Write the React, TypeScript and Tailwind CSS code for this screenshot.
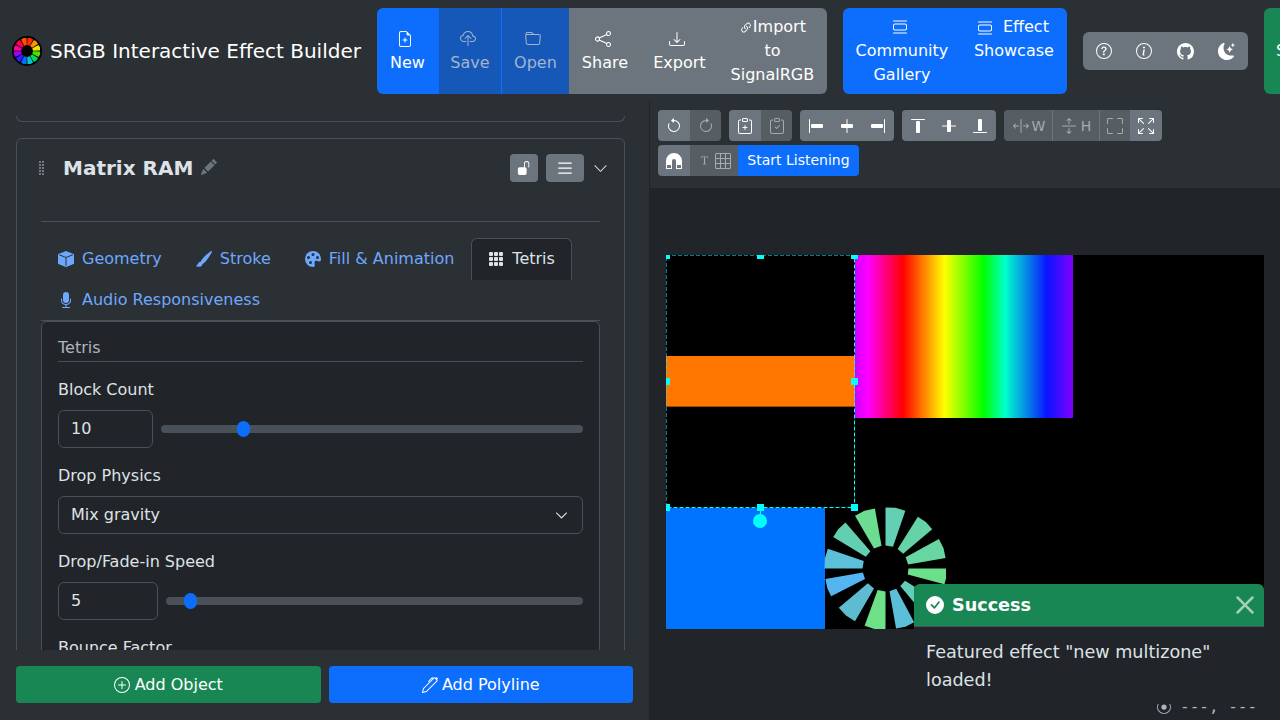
import type { ReactNode } from "react";
import {
  BsFileEarmarkPlus,
  BsCloudUpload,
  BsFolder,
  BsShare,
  BsDownload,
  BsLink45Deg,
  BsViewList,
  BsQuestionCircle,
  BsInfoCircle,
  BsGithub,
  BsMoonStarsFill,
  BsArrowCounterclockwise,
  BsArrowClockwise,
  BsClipboardPlus,
  BsClipboardCheck,
  BsAlignStart,
  BsAlignCenter,
  BsAlignEnd,
  BsAlignTop,
  BsAlignMiddle,
  BsAlignBottom,
  BsArrowsExpand,
  BsArrowsFullscreen,
  BsFullscreen,
  BsMagnetFill,
  BsFonts,
  BsGrid3X3,
  BsGripVertical,
  BsPencilFill,
  BsPen,
  BsUnlockFill,
  BsList,
  BsChevronDown,
  BsBoxFill,
  BsBrushFill,
  BsPaletteFill,
  BsGrid3X3GapFill,
  BsMicFill,
  BsPlusCircle,
  BsCheckCircleFill,
  BsRecordCircle,
  BsX,
} from "react-icons/bs";

const wedges = [
  { a: 0, b: 19, c: "#63cfb4" },
  { a: 32, b: 50, c: "#66d2a8" },
  { a: 61, b: 80, c: "#68d6a0" },
  { a: 90, b: 105, c: "#6be08a" },
  { a: 122, b: 140, c: "#62cdb8" },
  { a: 152, b: 170, c: "#5cbfd8" },
  { a: 180, b: 200, c: "#6de088" },
  { a: 210, b: 230, c: "#5dbcd0" },
  { a: 243, b: 260, c: "#55b5f0" },
  { a: 270, b: 289, c: "#5cc0d8" },
  { a: 301, b: 319, c: "#62cfb0" },
  { a: 330, b: 350, c: "#6cdc90" },
];

const logoColors = ["#ff2a00", "#ff9000", "#e8e800", "#50e000", "#00d860", "#00c8d0", "#0070ff", "#3020ff", "#a000ff", "#ff00a0", "#ff0050", "#ff5000"];

function pt(r: number, deg: number, cx: number, cy: number) {
  const t = (deg * Math.PI) / 180;
  return `${(cx + r * Math.sin(t)).toFixed(2)},${(cy - r * Math.cos(t)).toFixed(2)}`;
}

function wedgePoints(a: number, b: number, ri: number, ro: number, cx: number, cy: number) {
  const mid = (a + b) / 2;
  return [pt(ri, a, cx, cy), pt(ro, a, cx, cy), pt(ro + 0.5, mid, cx, cy), pt(ro, b, cx, cy), pt(ri, b, cx, cy)].join(" ");
}

function Logo() {
  return (
    <svg width="30" height="30" viewBox="0 0 30 30" className="shrink-0">
      <circle cx="15" cy="15" r="15" fill="#000" />
      {logoColors.map((c, i) => (
        <polygon key={c} points={wedgePoints(i * 30 + 2, i * 30 + 28, 6, 13, 15, 15)} fill={c} />
      ))}
    </svg>
  );
}

function NavButton({ icon, label, className }: { icon: ReactNode; label: ReactNode; className: string }) {
  return (
    <div className={`flex flex-col items-center justify-center px-3 py-[7px] text-center leading-6 ${className}`}>
      <span className="flex h-6 items-center justify-center pr-1 text-base">{icon}</span>
      <span>{label}</span>
    </div>
  );
}

function Tab({ icon, label, active, className }: { icon: ReactNode; label: string; active?: boolean; className?: string }) {
  return (
    <div
      className={
        active
          ? "flex h-[42px] items-center gap-2 rounded-t-md border border-b-0 border-[#495057] bg-[#212529] pr-4 pb-[2px] pl-4 text-[#dee2e6]"
          : `flex items-center gap-2 pr-[17px] pl-[17px] text-[#6ea8fe] ${className}`
      }
    >
      {icon}
      <span>{label}</span>
    </div>
  );
}

function Slider({ left }: { left: string }) {
  return (
    <div className="relative h-2 flex-1 rounded bg-[#495057]">
      <div className={`absolute top-[-4px] h-4 w-[13px] rounded-full bg-[#0d6efd] ${left}`} />
    </div>
  );
}

const dim = "flex items-center justify-center bg-[#565e64]";
const lit = "flex items-center justify-center bg-[#6c757d]";

export default function App() {
  return (
    <div className="flex h-[720px] w-[1280px] flex-col overflow-hidden bg-[#2b3035] font-['DejaVu_Sans',sans-serif] text-base text-[#dee2e6]">
      {/* Top bar */}
      <div className="flex h-[101px] shrink-0 items-center gap-4 whitespace-nowrap pt-px pl-3 text-white">
        <div className="flex items-center gap-2">
          <Logo />
          <span className="text-[20px]">SRGB Interactive Effect Builder</span>
        </div>
        <div className="flex h-[86px] shrink-0 overflow-hidden rounded-md">
          <NavButton className="w-[61px] bg-[#0d6efd]" icon={<BsFileEarmarkPlus />} label="New" />
          <NavButton className="w-[63px] border-l border-[#0d6efd] bg-[#1558b8] text-[#a3b4cc]" icon={<BsCloudUpload />} label="Save" />
          <NavButton className="w-[68px] border-l border-[#0d6efd] bg-[#1558b8] text-[#a3b4cc]" icon={<BsFolder />} label="Open" />
          <NavButton className="w-[72px] bg-[#6c757d]" icon={<BsShare />} label="Share" />
          <NavButton className="w-[77px] bg-[#6c757d]" icon={<BsDownload />} label="Export" />
          <div className="w-[109px] bg-[#6c757d] py-[7px] text-center leading-6">
            <BsLink45Deg className="inline text-sm" />
            Import
            <br />
            to
            <br />
            SignalRGB
          </div>
        </div>
        <div className="flex h-[86px] shrink-0 overflow-hidden rounded-md bg-[#0d6efd]">
          <div className="w-[118px] whitespace-normal py-[7px] text-center leading-6">
            <BsViewList className="mx-auto h-6 -translate-x-[2px]" />
            Community Gallery
          </div>
          <div className="w-[106px] whitespace-normal py-[7px] text-center leading-6">
            <BsViewList className="mr-[10px] ml-[-2px] inline" />
            Effect Showcase
          </div>
        </div>
        <div className="flex h-[38px] w-[165px] shrink-0 items-center justify-between rounded-md bg-[#6c757d] px-[13px] text-[16px]">
          <BsQuestionCircle />
          <BsInfoCircle />
          <BsGithub className="text-[17px]" />
          <BsMoonStarsFill className="text-[17px]" />
        </div>
        <div className="flex h-[86px] w-[60px] shrink-0 items-center rounded-md bg-[#198754] px-3">Save</div>
      </div>

      <div className="flex min-h-0 flex-1">
        {/* Left panel */}
        <div className="flex w-[650px] shrink-0 flex-col border-r border-[#212529]">
          <div className="h-[549px] overflow-hidden px-4">
            <div className="mt-[15px] h-[6px] w-[609px] rounded-b-md border-x border-b border-[#495057]" />
            <div className="mt-4 w-[609px] rounded-md border border-[#495057] px-6">
              <div className="flex h-[82px] items-start pt-[15px]">
                <BsGripVertical className="mt-[6px] ml-[-7px] text-[#8a9299]" />
                <span className="ml-[13px] text-[20px] font-bold leading-[28px]">Matrix RAM</span>
                <BsPencilFill className="mt-[5px] ml-2 text-[#6c757d]" />
                <div className="ml-auto flex h-7 w-7 items-center justify-center rounded bg-[#6c757d] text-white">
                  <BsUnlockFill size={14} />
                </div>
                <div className="ml-2 flex h-7 w-[38px] items-center justify-center rounded bg-[#6c757d] text-white">
                  <BsList size={20} />
                </div>
                <BsChevronDown className="mt-[7px] mr-[-8px] ml-[9px] shrink-0" size={15} />
              </div>
              <div className="border-t border-[#495057] pt-4">
                <div className="flex flex-wrap border-b border-[#495057]">
                  <Tab icon={<BsBoxFill />} label="Geometry" className="h-[42px]" />
                  <Tab icon={<BsBrushFill />} label="Stroke" className="h-[42px]" />
                  <Tab icon={<BsPaletteFill />} label="Fill & Animation" className="h-[42px]" />
                  <Tab icon={<BsGrid3X3GapFill />} label="Tetris" active />
                  <Tab icon={<BsMicFill />} label="Audio Responsiveness" className="h-10" />
                </div>
                <div className="rounded-md border border-[#495057] bg-[#212529] px-4 pt-[14px] pb-4">
                  <div className="border-b border-[#495057] pb-px text-[#adb5bd]">Tetris</div>
                  <div className="mt-4 mb-2">Block Count</div>
                  <div className="flex items-center gap-2">
                    <div className="flex h-[38px] w-[95px] items-center rounded-md border border-[#495057] px-3">10</div>
                    <Slider left="left-[76px]" />
                  </div>
                  <div className="mt-4 mb-2">Drop Physics</div>
                  <div className="flex h-[38px] items-center justify-between rounded-md border border-[#495057] px-3">
                    <span>Mix gravity</span>
                    <BsChevronDown size={13} strokeWidth={0.6} className="mr-[2px]" />
                  </div>
                  <div className="mt-4 mb-2">Drop/Fade-in Speed</div>
                  <div className="flex items-center gap-2">
                    <div className="flex h-[38px] w-[100px] items-center rounded-md border border-[#495057] px-3">5</div>
                    <Slider left="left-[18px]" />
                  </div>
                  <div className="mt-4">Bounce Factor</div>
                </div>
              </div>
            </div>
          </div>
          <div className="flex flex-1 gap-2 px-4 pt-4 text-white">
            <div className="flex h-[37px] flex-1 items-center justify-center gap-[5px] rounded bg-[#198754]">
              <BsPlusCircle />
              Add Object
            </div>
            <div className="flex h-[37px] flex-1 items-center justify-center gap-1 rounded bg-[#0d6efd]">
              <BsPen />
              Add Polyline
            </div>
          </div>
        </div>

        {/* Right panel */}
        <div className="flex min-w-0 flex-1 flex-col bg-[#212529]">
          <div className="flex h-[87px] shrink-0 flex-col gap-1 bg-[#2b3035] pt-[9px] pl-2 text-base text-white">
            <div className="flex h-[31px] gap-2">
              <div className="flex overflow-hidden rounded">
                <div className={`${lit} w-8`}><BsArrowCounterclockwise /></div>
                <div className={`${dim} w-[31px] text-[#a6abb0]`}><BsArrowClockwise /></div>
              </div>
              <div className="flex overflow-hidden rounded">
                <div className={`${lit} w-8`}><BsClipboardPlus /></div>
                <div className={`${dim} w-[31px] text-[#a6abb0]`}><BsClipboardCheck /></div>
              </div>
              <div className="flex w-[94px] items-center justify-between rounded bg-[#6c757d] px-2">
                <BsAlignStart />
                <BsAlignCenter />
                <BsAlignEnd />
              </div>
              <div className="flex w-[94px] items-center justify-between rounded bg-[#6c757d] px-2">
                <BsAlignTop />
                <BsAlignMiddle />
                <BsAlignBottom />
              </div>
              <div className="flex overflow-hidden rounded text-[#a6abb0]">
                <div className={`${dim} w-[49px] gap-[3px] border-r border-[#6c757d] pl-[2px]`}>
                  <BsArrowsExpand className="rotate-90" />
                  <span className="text-sm">W</span>
                </div>
                <div className={`${dim} w-[47px] gap-1 border-r border-[#6c757d]`}>
                  <BsArrowsExpand />
                  <span className="text-sm">H</span>
                </div>
                <div className={`${dim} w-[30px]`}><BsFullscreen /></div>
                <div className={`${lit} w-8 text-white`}><BsArrowsFullscreen /></div>
              </div>
            </div>
            <div className="flex h-[31px]">
              <div className="flex overflow-hidden rounded">
                <div className={`${lit} w-8`}><BsMagnetFill /></div>
                <div className={`${dim} w-12 gap-1 text-[#a6abb0]`}><BsFonts className="text-[13px]" /><BsGrid3X3 /></div>
                <div className="flex w-[121px] items-center justify-center bg-[#0d6efd] pb-[2px] text-sm">Start Listening</div>
              </div>
            </div>
          </div>

          {/* Canvas */}
          <div className="relative flex-1">
            <div className="absolute top-[67px] left-4 h-[374px] w-[598px] overflow-hidden bg-black">
              <div className="absolute top-0 left-[189px] h-[163px] w-[218px] bg-[linear-gradient(90deg,#d000ff_0%,#ff00ff_6%,#ff0000_22%,#ffff00_41%,#00ff00_59%,#00ffcc_69%,#0a14ff_88%,#8000ff_100%)]" />
              <div className="absolute top-[101px] left-0 h-[51px] w-[189px] border-b border-[#a04a00] bg-[#ff7700]" />
              <div className="absolute top-[253px] left-0 h-[121px] w-[159px] bg-[#0073ff]" />
              <svg className="absolute top-[252px] left-[158px]" width="122" height="122" viewBox="0 0 122 122">
                {wedges.map((w) => (
                  <polygon key={w.a} points={wedgePoints(w.a, w.b, 23, 61, 61.5, 61.5)} fill={w.c} />
                ))}
              </svg>
              <svg className="absolute top-0 left-0" width="190" height="254">
                <rect x="0" y="0" width="188.5" height="252.5" fill="none" stroke="#00ffff" strokeDasharray="4 2" />
              </svg>
              <div className="absolute top-[-4px] left-[-4px] h-2 w-2 bg-[#00ffff]" />
              <div className="absolute top-[-4px] left-[91px] h-2 w-[7px] bg-[#00ffff]" />
              <div className="absolute top-[-4px] left-[185px] h-2 w-[7px] bg-[#00ffff]" />
              <div className="absolute top-[123px] left-[-4px] h-[7px] w-2 bg-[#00ffff]" />
              <div className="absolute top-[123px] left-[185px] h-[7px] w-[7px] bg-[#00ffff]" />
              <div className="absolute top-[249px] left-[-4px] h-[7px] w-2 bg-[#00ffff]" />
              <div className="absolute top-[249px] left-[91px] h-[7px] w-[7px] bg-[#00ffff]" />
              <div className="absolute top-[249px] left-[185px] h-[7px] w-[7px] bg-[#00ffff]" />
              <div className="absolute top-[256px] left-[94px] h-[4px] w-px bg-[#00ffff]" />
              <div className="absolute top-[259px] left-[87px] h-[14px] w-[14px] rounded-full bg-[#00ffff]" />
            </div>

            <div className="absolute top-[507px] left-[507px] flex items-center gap-[9px] text-sm text-[#adb5bd]">
              <BsRecordCircle />
              <span className="font-['DejaVu_Sans_Mono',monospace] text-base">---, ---</span>
            </div>

            <div className="absolute top-[396px] left-[264px] w-[350px] overflow-hidden rounded-t-md bg-[#212529]">
              <div className="flex h-[43px] items-center border-b border-[#495057] bg-[#198754] px-3 text-white">
                <BsCheckCircleFill className="mr-2 text-[18px]" />
                <span className="text-[17.6px] font-bold">Success</span>
                <BsX className="mr-[-13px] ml-auto text-[#a3cfbb]" size={40} />
              </div>
              <div className="h-[77px] px-3 py-[11px] text-[17.6px] leading-7 text-[#dee2e6]">
                Featured effect "new multizone" loaded!
              </div>
            </div>
          </div>
        </div>
      </div>
    </div>
  );
}
